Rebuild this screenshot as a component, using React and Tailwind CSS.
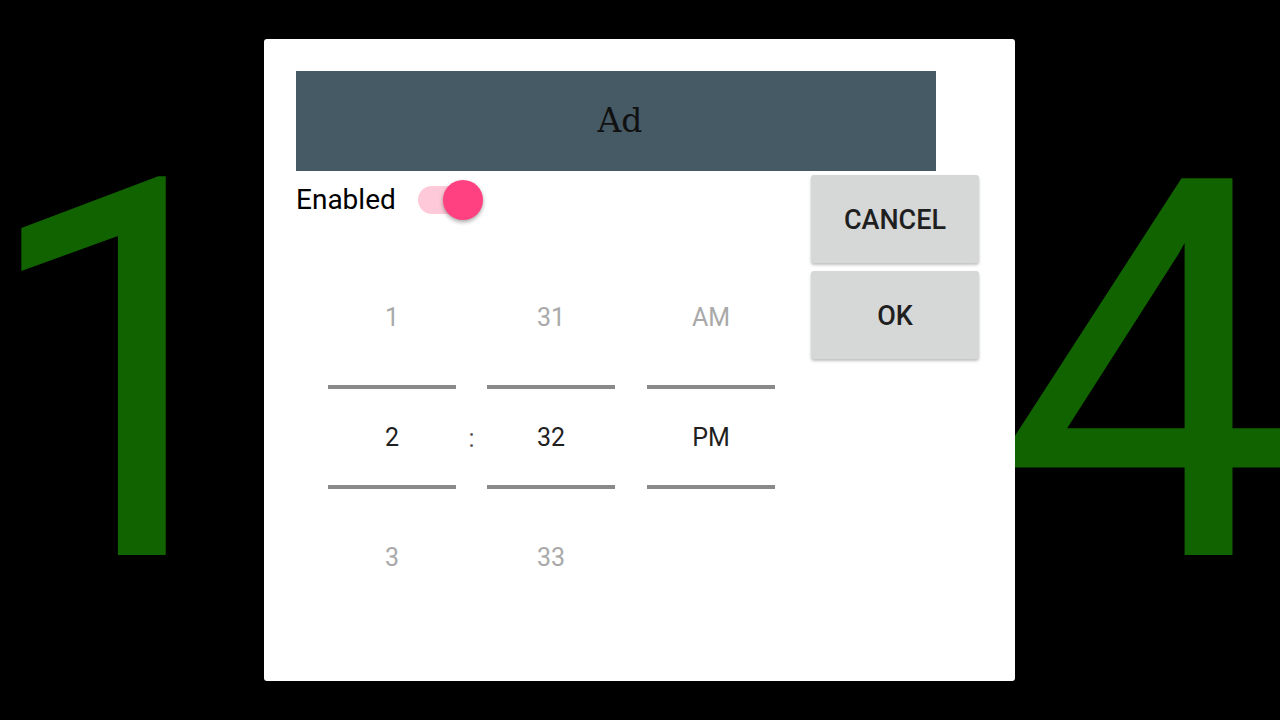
import { useState } from 'react';

const roboto = { fontFamily: 'Roboto, "Noto Sans", sans-serif' };

const PickerColumn = ({ items }) => (
  <div className="flex w-[128px] flex-col">
    <div className="flex h-[120px] items-center justify-center pt-[2px] text-[25px] text-[#a9a9a9]">{items[0]}</div>
    <div className="mt-[8px] h-[4px] bg-[#8a8a8a]" />
    <div className="flex h-[96px] items-center justify-center pt-[2px] text-[25px] text-[#1f1f1f]">{items[1]}</div>
    <div className="h-[4px] bg-[#8a8a8a]" />
    <div className="mt-[8px] flex h-[120px] items-center justify-center pt-[2px] text-[25px] text-[#a9a9a9]">{items[2]}</div>
  </div>
);

const App = () => {
  const [enabled, setEnabled] = useState(true);

  return (
    <div className="relative h-[720px] w-[1280px] overflow-hidden bg-black" style={roboto}>
      {/* clock behind the dialog */}
      <div className="flex h-full items-center justify-center pr-[6px] pt-[27px]">
        <div className="whitespace-nowrap text-[530px] leading-none text-[#116300]" style={{ fontFamily: 'Roboto, sans-serif' }}>
          12:34
        </div>
      </div>

      <div className="absolute left-[264px] top-[39px] h-[642px] w-[751px] rounded-[3px] bg-white p-[32px]">
        <div className="flex h-[100px] w-[640px] items-center justify-center bg-[#465a65] pl-[8px]">
          <span className="text-[33px] text-[#111]" style={{ fontFamily: '"DejaVu Serif", serif' }}>Ad</span>
        </div>

        <div className="flex">
          <div className="flex-1">
            <div className="flex h-[56px] items-center pt-[2px]">
              <span className="text-[28px] text-black">Enabled</span>
              <button
                type="button"
                onClick={() => setEnabled(!enabled)}
                className="relative ml-[22px] h-[28px] w-[60px] rounded-full bg-[#fecad9]"
              >
                <span className="absolute left-[25px] top-[-6px] h-[40px] w-[40px] rounded-full bg-[#ff4081] shadow-[0_2px_4px_rgba(0,0,0,0.35)]" />
              </button>
            </div>

            <div className="ml-[32px] mt-[30px] flex">
              <PickerColumn items={['1', '2', '3']} />
              <div className="flex w-[31px] flex-col">
                <div className="h-[128px]" />
                <div className="flex h-[104px] items-center justify-center pt-[4px] text-[25px] text-[#555]">:</div>
              </div>
              <PickerColumn items={['31', '32', '33']} />
              <div className="w-[32px]" />
              <PickerColumn items={['AM', 'PM', '']} />
            </div>
          </div>

          <div className="flex flex-col gap-[8px] pr-[4px] pt-[4px]">
            {['CANCEL', 'OK'].map((label) => (
              <button
                key={label}
                type="button"
                className="flex h-[88px] w-[168px] items-center justify-center rounded-[3px] bg-[#d6d7d7] pt-[3px] text-[27px] font-medium text-[#1f1f1f] shadow-[0_2px_3px_rgba(0,0,0,0.25)]"
              >
                {label}
              </button>
            ))}
          </div>
        </div>
      </div>
    </div>
  );
};

export default App;
